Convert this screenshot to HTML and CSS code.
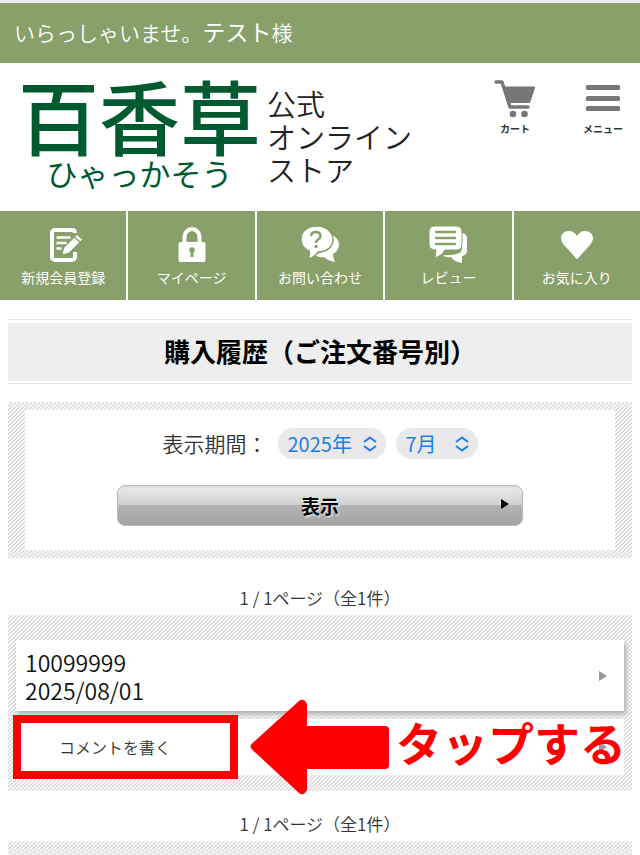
FILE: index.html
```
<!DOCTYPE html>
<html lang="ja">
<head>
    <meta charset="UTF-8">
    <meta name="viewport" content="width=device-width, initial-scale=1.0">
    <title>購入履歴</title>
    <link rel="stylesheet" href="styles.css">
</head>
<body>
    <div class="greeting">いらっしゃいませ。<strong>テスト</strong>様</div>

    <header class="header">
        <a href="#" class="logo">
            <span class="logo-mark">
                <span class="logo-name">百香草</span>
                <span class="logo-kana">ひゃっかそう</span>
            </span>
            <span class="logo-sub">公式<br>オンライン<br>ストア</span>
        </a>
        <div class="header-tools">
            <a href="#" class="tool">
                <svg width="42" height="38" viewBox="0 0 42 38" fill="#777">
                    <path d="M2 2h6l8 25h18" fill="none" stroke="#777" stroke-width="3.4" stroke-linecap="round" stroke-linejoin="round"/>
                    <path d="M10 6.500h30q1.500 0 1 1.500l-4.500 13.500q-.5 1.500-2 1.500H15z"/>
                    <circle cx="19" cy="34" r="3.300"/>
                    <circle cx="30.500" cy="34" r="3.300"/>
                </svg>
                <span>カート</span>
            </a>
            <button type="button" class="tool">
                <svg width="36" height="38" viewBox="0 0 36 38" fill="#777">
                    <rect x="1" y="5" width="34" height="5" rx="1.500"/>
                    <rect x="1" y="16" width="34" height="5" rx="1.500"/>
                    <rect x="1" y="26" width="34" height="5" rx="1.500"/>
                </svg>
                <span>メニュー</span>
            </button>
        </div>
    </header>

    <nav class="nav">
        <a href="#">
            <svg width="40" height="40" viewBox="0 0 40 40">
                <path d="M32 27v5a3 3 0 0 1-3 3H12a3 3 0 0 1-3-3V8a3 3 0 0 1 3-3h17q3 0 3 3" fill="none" stroke="#fff" stroke-width="4"/>
                <path d="M13.500 12.500h14M13.500 18h10M13.500 23.500h5" stroke="#fff" stroke-width="2.500"/>
                <path d="M19 30l1.500-7L34 9.500l5.500 5L26 28z" fill="#fff" stroke="#88a069" stroke-width="1"/>
                <path d="M31.500 12l5.500 5" stroke="#88a069" stroke-width="1.300"/>
            </svg>
            <span>新規会員登録</span>
        </a>
        <a href="#">
            <svg width="40" height="40" viewBox="0 0 40 40">
                <path d="M12.500 19v-7a7.500 8 0 0 1 15 0v7" fill="none" stroke="#fff" stroke-width="4"/>
                <rect x="6.500" y="17" width="27" height="20" rx="2" fill="#fff"/>
                <circle cx="20" cy="25" r="2.800" fill="#88a069"/>
                <path d="M20 26v6" stroke="#88a069" stroke-width="3"/>
            </svg>
            <span>マイページ</span>
        </a>
        <a href="#">
            <svg width="40" height="40" viewBox="0 0 40 40">
                <path d="M31 9q9 5 8 12-1 5-6 8 0 4 2 8-7-1-11-5-6 1-10-3 16 0 17-20" fill="#fff"/>
                <path d="M17 1C8 1 1 6 1 14c0 6 3 10 8 12q1 4-1 8 6-1 10-7c10 0 15-6 15-13S26 1 17 1" fill="#fff" stroke="#88a069" stroke-width="1.500"/>
                <path d="M11 11q.5-4 5-4 4.500.5 4.500 4 0 2-3 4-1.500 1-1.500 3" fill="none" stroke="#88a069" stroke-width="2.500"/>
                <circle cx="16" cy="21.500" r="1.700" fill="#88a069"/>
            </svg>
            <span>お問い合わせ</span>
        </a>
        <a href="#">
            <svg width="40" height="40" viewBox="0 0 40 40">
                <path d="M34 8q5 1 5 5v13q0 4-5 5v7q-8-1-11-6-6 1-8-2 18 1 19-6z" fill="#fff"/>
                <path d="M7 1h21q6 0 6 6v12q0 6-6 6H17q-3 6-10 8l1-8Q1 25 1 19V7q0-6 6-6" fill="#fff" stroke="#88a069" stroke-width="1"/>
                <path d="M8 7h19M8 13h19M8 19h19" stroke="#88a069" stroke-width="2.300" stroke-linecap="round"/>
            </svg>
            <span>レビュー</span>
        </a>
        <a href="#">
            <svg width="40" height="40" viewBox="0 0 40 40">
                <path d="M20 34Q19 34 17 31L7 20C1 13 5 6 12 6q5 0 8 5 3-5 8-5c7 0 11 7 5 14L23 31q-2 3-3 3" fill="#fff"/>
            </svg>
            <span>お気に入り</span>
        </a>
    </nav>

    <main class="main">
        <div class="title-bar">
            <h1 class="page-title">購入履歴（ご注文番号別）</h1>
        </div>

        <form class="panel search">
            <div class="search-box">
                <div class="period">
                    <label for="year">表示期間：</label>
                    <span class="select">
                        <select id="year"><option>2025年</option></select>
                        <svg class="chevrons" width="14" height="16" viewBox="0 0 14 16"><path d="M1 6L7 1.500 13 6M1 10L7 14.500 13 10"/></svg>
                    </span>
                    <span class="select select-month">
                        <select id="month" aria-label="月"><option>7月</option></select>
                        <svg class="chevrons" width="14" height="16" viewBox="0 0 14 16"><path d="M1 6L7 1.500 13 6M1 10L7 14.500 13 10"/></svg>
                    </span>
                </div>
                <button type="button" class="show-button">
                    表示
                    <svg class="button-arrow" width="8" height="10" viewBox="0 0 8 10"><path d="M0 0l8 5-8 5z"/></svg>
                </button>
            </div>
        </form>

        <p class="pager">1 / 1ページ（全1件）</p>

        <section class="panel orders">
            <a href="#" class="order">
                <span>10099999<br>2025/08/01</span>
                <svg width="8" height="10" viewBox="0 0 8 10" fill="#999"><path d="M0 0l8 5-8 5z"/></svg>
            </a>
            <a href="#" class="comment">
                <span>コメントを書く</span>
                <svg width="8" height="10" viewBox="0 0 8 10" fill="#999"><path d="M0 0l8 5-8 5z"/></svg>
                <!-- tap guide -->
                <span class="frame"></span>
                <span class="guide">
                    <svg width="140" height="96" viewBox="0 0 140 96" fill="#f00"><path d="M2 44.500L49 2q3-2.500 6 0l2 3v22h78q4 0 4 4v35q0 4-4 4H57v21l-2 3q-3 2.500-6 0L2 50.500q-3-3 0-6"/></svg>
                    <span class="guide-text">タップする</span>
                </span>
            </a>
        </section>

        <p class="pager">1 / 1ページ（全1件）</p>

        <section class="panel next-panel"></section>
    </main>
</body>
</html>
```
FILE: styles.css
```
* {
    margin: 0;
    padding: 0;
    box-sizing: border-box;
}

body {
    font-family: 'Noto Sans CJK JP', sans-serif;
    background: #fff;
    color: #333;
    overflow-x: hidden;
}

a {
    color: inherit;
    text-decoration: none;
}

svg {
    flex: none;
}

.greeting {
    height: 63px;
    background: #88a069;
    border-top: 3px solid #ececf0;
    color: #fff;
    font-size: 21px;
    font-weight: 350;
    line-height: 56px;
    padding: 0 14px;
}

.greeting strong {
    font-size: 23px;
    font-weight: 400;
}

.header {
    display: flex;
    justify-content: space-between;
    height: 148px;
    padding: 17px 17px 0 18px;
}

.logo {
    display: flex;
    gap: 6px;
}

.logo-mark {
    display: flex;
    flex-direction: column;
    align-items: center;
    color: #005a30;
}

.logo-name {
    font-size: 81px;
    font-weight: 500;
    line-height: 68px;
}

.logo-kana {
    font-size: 31px;
    line-height: 50px;
}

.logo-sub {
    color: #222;
    font-size: 29px;
    font-weight: 350;
    line-height: 33px;
    padding-top: 7px;
}

.header-tools {
    display: flex;
    align-items: flex-start;
    gap: 47px;
}

.tool {
    display: flex;
    flex-direction: column;
    align-items: center;
    background: none;
    border: 0;
    color: #333;
    font-family: inherit;
    font-size: 10px;
    font-weight: 700;
    line-height: 22px;
}

.nav {
    display: grid;
    grid-template-columns: repeat(5, 1fr);
    gap: 2px;
}

.nav a {
    display: flex;
    flex-direction: column;
    align-items: center;
    background: #88a069;
    color: #fff;
    font-size: 14px;
    line-height: 24px;
    padding: 14px 0 11px;
}

.main {
    padding: 19px 8px 0;
}

.title-bar {
    border-top: 1px solid #e6e6e6;
    border-bottom: 1px solid #e6e6e6;
    padding: 3px 0 2px;
    margin-bottom: 18px;
}

.page-title {
    background: #eee;
    color: #000;
    font-size: 26px;
    font-weight: 700;
    line-height: 56px;
    padding-bottom: 2px;
    text-align: center;
}

.panel {
    background: linear-gradient(135deg, #dedede 13%, #fafafa 13%, #fafafa 38%, #dedede 38%, #dedede 63%, #fafafa 63%, #fafafa 88%, #dedede 88%) 0 0 / 4px 4px;
}

.search {
    padding: 8px 17px;
}

.search-box {
    background: #fff;
    padding: 15px 92px 24px;
}

.period {
    display: flex;
    justify-content: center;
    align-items: center;
    gap: 10px;
    font-size: 21px;
    font-weight: 350;
    line-height: 36px;
    margin-bottom: 24px;
}

.select {
    position: relative;
    display: flex;
}

.select select {
    appearance: none;
    width: 108px;
    height: 31px;
    background: #e9e9eb;
    border: 0;
    border-radius: 16px;
    color: #1a7ee6;
    font-family: inherit;
    font-size: 20px;
    padding: 0 10px;
}

.select-month select {
    width: 82px;
}

.chevrons {
    position: absolute;
    top: 8px;
    right: 9px;
    fill: none;
    stroke: #1a7ee6;
    stroke-width: 2;
    pointer-events: none;
}

.show-button {
    position: relative;
    width: 100%;
    height: 41px;
    background: linear-gradient(#ececec, #d0d0d0 48%, #b4b4b4 48%, #a4a4a4);
    border: 1px solid #bbb;
    border-radius: 8px;
    box-shadow: inset 0 2px 1px #ddd;
    color: #000;
    font-family: inherit;
    font-size: 19px;
    font-weight: 700;
    text-shadow: 1px 1px 2px #fff;
}

.button-arrow {
    position: absolute;
    top: 13px;
    right: 13px;
}

.pager {
    font-size: 17px;
    font-weight: 350;
    line-height: 24px;
    padding: 28px 0 5px;
    text-align: center;
}

.orders {
    padding: 25px 8px 16px;
}

.orders + .pager {
    padding-top: 21px;
}

.order,
.comment {
    display: flex;
    justify-content: space-between;
    align-items: center;
    background: #fff;
}

.order {
    box-shadow: 2px 3px 5px #aaa;
    color: #111;
    font-size: 23px;
    font-weight: 350;
    line-height: 28px;
    padding: 8px 17px 7px 9px;
    margin-bottom: 8px;
}

.comment {
    position: relative;
    font-size: 16px;
    font-weight: 350;
    line-height: 56px;
    padding: 0 17px 0 43px;
}

.frame {
    position: absolute;
    top: -4px;
    left: -3px;
    width: 225px;
    height: 64px;
    border: 8px solid #f00;
}

.guide {
    position: absolute;
    top: -20px;
    right: -2px;
    display: flex;
    align-items: center;
    gap: 6px;
    color: #f00;
    font-size: 46px;
    font-weight: 700;
}

.guide-text {
    padding-bottom: 12px;
}

.next-panel {
    height: 25px;
}
```
